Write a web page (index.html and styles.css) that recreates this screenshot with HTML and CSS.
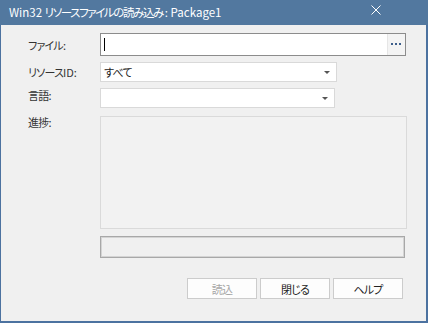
FILE: index.html
```html
<!DOCTYPE html>
<html lang="ja">
<head>
    <meta charset="UTF-8">
    <title>Win32 リソースファイルの読み込み</title>
    <link rel="stylesheet" href="styles.css">
</head>
<body>
    <div class="window">
        <div class="titlebar">
            <span class="title">Win32 <span class="jp">リソースファイルの読み込み</span>: Package1</span>
            <svg class="close" width="10" height="10" viewBox="0 0 10 10">
                <path d="M0.5 0.5 L9.5 9.5 M9.5 0.5 L0.5 9.5" stroke="#fff" stroke-width="1" fill="none"/>
            </svg>
        </div>
        <div class="content">
            <div class="row row-file">
                <label>ファイル:</label>
                <div class="file-input">
                    <span class="caret"></span>
                    <span class="browse">
                        <svg width="11" height="3" viewBox="0 0 11 3">
                            <rect x="0" y="0" width="2" height="2" fill="#3d5f8c"/>
                            <rect x="4" y="0" width="2" height="2" fill="#3d5f8c"/>
                            <rect x="8" y="0" width="2" height="2" fill="#3d5f8c"/>
                        </svg>
                    </span>
                </div>
            </div>
            <div class="row row-combo">
                <label>リソース<span class="latin">ID:</span></label>
                <div class="combo combo-id">
                    <span class="combo-text">すべて</span>
                    <span class="arrow"></span>
                </div>
            </div>
            <div class="row row-combo">
                <label class="label-top">言語:</label>
                <div class="combo combo-lang">
                    <span class="combo-text"></span>
                    <span class="arrow"></span>
                </div>
            </div>
            <div class="row row-progress">
                <label class="label-top">進捗:</label>
                <div class="log-box"></div>
            </div>
            <div class="row row-bar">
                <span class="spacer"></span>
                <div class="progress-bar"></div>
            </div>
            <div class="buttons">
                <button class="btn" disabled>読込</button>
                <button class="btn">閉じる</button>
                <button class="btn">ヘルプ</button>
            </div>
        </div>
    </div>
</body>
</html>
```

FILE: styles.css
```css
html, body {
    margin: 0;
    padding: 0;
}
body {
    font-family: "Noto Sans CJK JP", "Noto Sans", sans-serif;
    font-size: 11px;
    line-height: 16px;
    font-feature-settings: "palt";
    letter-spacing: -0.8px;
    color: #333;
    background: #f0f0f0;
}
.window {
    width: 428px;
    height: 323px;
    box-sizing: border-box;
    border: 1px solid #4c72a0;
    border-top: none;
    border-right-width: 2px;
    border-bottom-width: 2px;
    background: #f0f0f0;
    display: flex;
    flex-direction: column;
}
.titlebar {
    height: 25px;
    box-sizing: border-box;
    background: #52789f;
    display: flex;
    align-items: center;
    padding: 0 0 1px 9px;
    margin: 0 -2px 0 -1px;
    position: relative;
}
.title {
    color: #fff;
    font-size: 11.5px;
    letter-spacing: 0;
}
.title .jp {
    letter-spacing: -1.4px;
    margin-right: 2px;
}
.latin {
    letter-spacing: 0;
}
.close {
    position: absolute;
    right: 47px;
    top: 5px;
}
.content {
    padding: 8px 19px 0 27px;
    display: flex;
    flex-direction: column;
}
.row {
    display: flex;
    align-items: center;
}
.row label {
    width: 72px;
    flex: none;
}
.row .label-top {
    align-self: flex-start;
}
.row-file {
    height: 23px;
}
.file-input {
    flex: none;
    width: 306px;
    height: 23px;
    box-sizing: border-box;
    border: 1px solid #8c8c8c;
    background: #fff;
    display: flex;
    align-items: center;
    justify-content: space-between;
    padding-left: 3px;
}
.caret {
    width: 1px;
    height: 13px;
    background: #000;
}
.browse {
    width: 17px;
    height: 21px;
    background: #f4f4f4;
    border-left: 1px solid #e6e6e6;
    display: flex;
    align-items: center;
    justify-content: center;
}
.row-combo {
    margin-top: 6px;
    height: 20px;
}
.row-combo + .row-combo {
    margin-top: 6px;
}
.row-combo .label-top {
    margin-top: -1px;
}
.combo {
    flex: none;
    height: 20px;
    box-sizing: border-box;
    border: 1px solid #d9d9d9;
    background: #fff;
    display: flex;
    align-items: center;
    justify-content: space-between;
    padding: 0 6px 0 3px;
}
.combo-id {
    width: 237px;
}
.combo-lang {
    width: 235px;
}
.combo-text {
    color: #222;
}
.arrow {
    width: 0;
    height: 0;
    border-left: 3px solid transparent;
    border-right: 3px solid transparent;
    border-top: 3px solid #555;
}
.row-progress {
    margin-top: 8px;
    align-items: flex-start;
}
.row-progress .label-top {
    margin-top: -2px;
}
.log-box {
    width: 307px;
    height: 113px;
    box-sizing: border-box;
    border: 1px solid #dadada;
    background: #f2f2f2;
}
.row-bar {
    margin-top: 7px;
}
.spacer {
    width: 72px;
    flex: none;
}
.progress-bar {
    width: 305px;
    height: 22px;
    box-sizing: border-box;
    border: 1px solid #a8a8a8;
    box-shadow: inset 0 0 0 1px #d4d4d4;
    background: #f0f0f0;
}
.buttons {
    margin-top: 20px;
    display: flex;
    justify-content: flex-end;
    gap: 3px;
    padding-right: 4px;
}
.btn {
    width: 70px;
    height: 21px;
    box-sizing: border-box;
    border: 1px solid #cccccc;
    background: #fdfdfd;
    font-family: inherit;
    font-size: 11px;
    font-feature-settings: "palt";
    letter-spacing: -0.8px;
    color: #222;
    padding: 0;
}
.btn:disabled {
    color: #a6a6a6;
}
```
